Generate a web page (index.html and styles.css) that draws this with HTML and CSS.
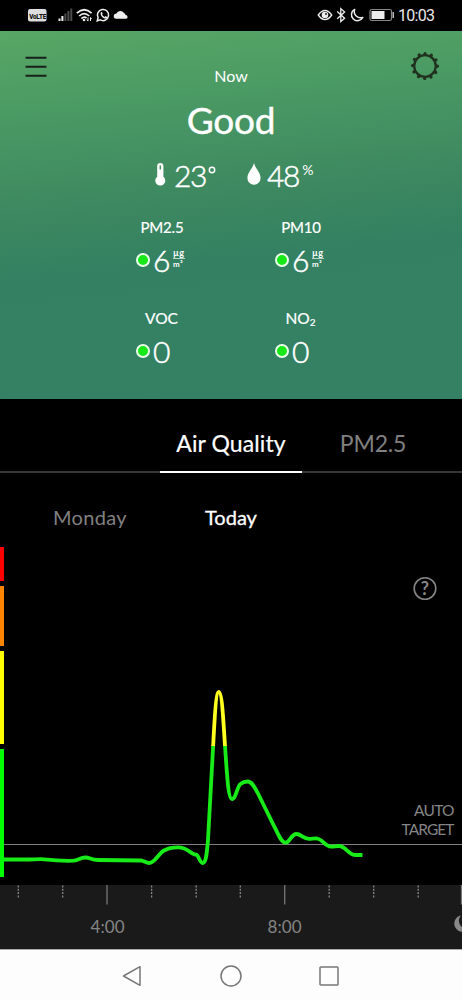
FILE: index.html
```html
<!DOCTYPE html>
<html lang="en">
<head>
<meta charset="utf-8">
<meta name="viewport" content="width=device-width, initial-scale=1">
<title>Air Quality</title>
<link rel="stylesheet" href="styles.css">
</head>
<body>
<div class="phone">
  <div class="status">
    <svg class="status-left" width="106" height="20" viewBox="26 5 106 20">
      <rect x="28" y="9" width="18.500" height="12.500" rx="2" fill="#ddd"/>
      <text class="volte" transform="translate(29.200 18.600) scale(.78 1)">VoLTE</text>
      <g fill="#eee"><rect x="58.500" y="18.500" width="2" height="2.500"/><rect x="61.400" y="16" width="2" height="5"/></g>
      <g fill="#4b4b4b"><rect x="64.400" y="13.500" width="2" height="7.500"/><rect x="67.400" y="11" width="2" height="10"/><rect x="70.300" y="8.500" width="2" height="12.500"/></g>
      <g fill="none" stroke="#eee" stroke-width="1.700"><path d="M76.800 13.200Q84.200 6.300 91.600 13.200M79.200 16Q84.200 11.300 89.200 16M81.400 18.600Q84.200 16 86.500 18"/></g>
      <circle cx="84" cy="20" r="1.300" fill="#eee"/>
      <path d="M88 17.500v3.500M86.800 19.700l1.200 1.500M90.500 21v-3.500l1 1.500" fill="none" stroke="#eee"/>
      <path d="M97.200 20.900l.9-3.200a5.600 5.600 0 1 1 2.200 2.200z" fill="none" stroke="#eee" stroke-width="1.500"/>
      <path d="M100.800 12.200l1.100-.2.800 1.800-.6.900q.9 1.600 2.500 2.200l.9-.9 1.700.9q0 1.500-1.500 1.700c-2.900 0-5.900-3.400-4.900-6.400z" fill="#eee"/>
      <path d="M116.200 18.700a2.600 2.600 0 0 1 .2-5.200 4.300 4.300 0 0 1 7.600-.4 2.600 2.600 0 0 1 1.500 2 1.800 1.800 0 0 1 .5 3.600z" fill="#eee"/>
    </svg>
    <div class="status-right">
      <svg width="80" height="20" viewBox="316 5 80 20">
        <path d="M318.300 15Q321.500 10.500 325 10.500T331.700 15Q328.500 19.600 325 19.600T318.300 15z" fill="none" stroke="#eee" stroke-width="1.400"/>
        <circle cx="325" cy="15" r="3.300" fill="#eee"/><circle cx="326" cy="14" r="1" fill="#222"/>
        <path d="M337.200 11.500l7.400 6.800-3.800 3.300V8.600l3.800 3.300-7.400 6.800" fill="none" stroke="#eee" stroke-width="1.300"/>
        <path d="M354.600 9.400A6 6 0 1 0 362.800 17.400 6.400 6.400 0 0 1 354.600 9.400z" fill="none" stroke="#eee" stroke-width="1.500" stroke-linejoin="round"/>
        <rect x="370" y="9.500" width="21.500" height="11" rx="1.800" fill="none" stroke="#888" stroke-width="1.200"/>
        <rect x="371.500" y="11" width="13" height="8" fill="#eee"/><rect x="392.500" y="12" width="1.500" height="6" fill="#bbb"/>
      </svg>
      <span class="clock">10:03</span>
    </div>
  </div>

  <header class="hero">
    <svg class="menu" width="22" height="22" viewBox="0 0 22 22"><path d="M.5 1.700h21M.5 10.700h21M.5 19.700h21" stroke="#17201a" stroke-width="2"/></svg>
    <svg class="gear" width="30" height="30" viewBox="-15 -15 30 30">
      <circle r="10.800" fill="none" stroke="#20311f" stroke-width="2.300"/>
      <circle r="12.500" fill="none" stroke="#20311f" stroke-width="3.200" stroke-linecap="round" stroke-dasharray=".1 6.445" transform="rotate(-90)"/>
    </svg>
    <div class="now">Now</div>
    <div class="rating">Good</div>
    <div class="climate">
      <div class="reading">
        <svg width="11" height="23" viewBox="0 0 11 23"><path d="M2.200 3a3.100 3 0 0 1 6.200 0v10.700a5 5 0 1 1-6.200 0z" fill="#fff"/><path d="M5.300 2.500v4" stroke="#43925f" stroke-width="1.500"/></svg>
        <span class="big temp">23</span><svg class="degree" width="8" height="8" viewBox="0 0 8 8"><circle cx="4" cy="4" r="2.700" fill="none" stroke="#fff" stroke-width="1.500"/></svg>
      </div>
      <div class="reading humidity">
        <svg width="14" height="23" viewBox="0 0 14 23"><path d="M7 0C8 5 13.600 9.500 13.600 15a6.600 6.800 0 0 1-13.200 0C.400 9.500 6 5 7 0z" fill="#fff"/></svg>
        <span class="big hum">48</span><span class="percent">%</span>
      </div>
    </div>
    <div class="metrics">
      <div class="metric"><div class="label pm">PM2.5</div><div class="value"><i class="dot"></i><span class="big">6</span><span class="unit"><b>µg</b><b>m³</b></span></div></div>
      <div class="metric"><div class="label pm">PM10</div><div class="value"><i class="dot"></i><span class="big">6</span><span class="unit"><b>µg</b><b>m³</b></span></div></div>
      <div class="metric"><div class="label">VOC</div><div class="value"><i class="dot"></i><span class="big">0</span></div></div>
      <div class="metric"><div class="label">NO<sub>2</sub></div><div class="value"><i class="dot"></i><span class="big">0</span></div></div>
    </div>
  </header>

  <nav class="tabs"><span class="tab active">Air Quality</span><span class="tab">PM2.5</span></nav>
  <div class="days"><span class="day monday">Monday</span><span class="day today">Today</span></div>

  <svg class="chart" width="462" height="345" viewBox="0 540 462 345">
    <defs>
      <linearGradient id="level" gradientUnits="userSpaceOnUse" x1="0" y1="540" x2="0" y2="885"><stop offset=".597" stop-color="#ffff20"/><stop offset=".597" stop-color="#18ec18"/></linearGradient>
    </defs>
    <path d="M4 844.500H462" stroke="#808080" stroke-width="1.200"/>
    <path d="M4 859.500H25C34 859.500 38 859 44 859.300C54 860.400 64 861 73 860.700C78 860.400 80 857.500 85.500 857.500C90 857.500 91 860 98 860L141 860.500C144 860.600 146 863 149 863C155 863 158 854 164 850.500C169 847.500 174 847.300 178 847.300C189 847.300 190 854.700 196.500 854.700C199 856 200 863 202.500 863C206 863 206.700 855 208 840C209.500 815 211 780 213.300 743C214.500 720 216 692 218.800 692C222 692 223.300 720 225 746C227 773 228 799 232 799C236 799 237 786.500 240.500 784C243 782 245 781.500 247.500 781.500C252 781.500 254.500 787 258 793.500L274 826C278 833 281 842.700 285.500 842.700C290 842.700 291 834 296.500 834C301 834 303 838.800 309 838.800C312 838.800 314 838.300 317 838.500C323 839.500 325 846.500 331 846.700C335 846.700 335 846 339 846C346 846 348 855 356 855H362.500" fill="none" stroke="url(#level)" stroke-width="3.800" stroke-linejoin="round"/>
    <path d="M0 547h4v34H0z" fill="#f00"/><path d="M0 586h4v60H0z" fill="#ff8500"/><path d="M0 651h4v93H0z" fill="#ff0"/><path d="M0 749h4v128H0z" fill="#0f0"/>
    <circle cx="425" cy="588.500" r="10.800" fill="none" stroke="#858585" stroke-width="1.600"/>
    <text class="help" x="425" y="594.700" text-anchor="middle">?</text>
    <text class="target" x="414" y="816.200" textLength="40.500">AUTO</text>
    <text class="target" x="401.500" y="835" textLength="53">TARGET</text>
  </svg>

  <svg class="axis" width="462" height="64" viewBox="0 885 462 64">
    <path d="M107 885v19.500M284.700 885v19.500M461.500 885v19.500" stroke="#777" stroke-width="1.300"/>
    <path d="M18.300 885.500v12M62.700 885.500v12M151.600 885.500v12M196.200 885.500v12M240.300 885.500v12M329.200 885.500v12M373.700 885.500v12M418.200 885.500v12" stroke="#888" stroke-width="1.300" stroke-dasharray="2 1.300"/>
    <text class="hour" x="90.500" y="932.700" textLength="34">4:00</text>
    <text class="hour" x="267.500" y="932.700" textLength="34">8:00</text>
    <path d="M461 915.500a8.200 8.200 0 1 0 8 13a8 8 0 0 1-8-13z" fill="#888"/>
  </svg>

  <footer class="navbar">
    <svg width="20" height="22" viewBox="0 0 20 22"><path d="M18 1.700v18.600L1.500 11z" fill="none" stroke="#777" stroke-width="1.500" stroke-linejoin="round"/></svg>
    <svg width="22" height="22" viewBox="0 0 22 22"><circle cx="11" cy="11" r="10" fill="none" stroke="#777" stroke-width="1.500"/></svg>
    <svg width="20" height="20" viewBox="0 0 20 20"><rect x="1" y="1" width="18" height="18" rx=".8" fill="none" stroke="#777" stroke-width="1.500"/></svg>
  </footer>
</div>
</body>
</html>
```
FILE: styles.css
```css
* { box-sizing: border-box; }
body { margin: 0; background: #000; color: #fff; font-family: Lato, "Liberation Sans", sans-serif; }
svg { display: block; flex: none; }
.phone { width: 462px; height: 1000px; display: flex; flex-direction: column; overflow: hidden; }
.status { height: 31px; padding: 5px 0 0 26px; display: flex; justify-content: space-between; }
.status-right { display: flex; width: 146px; }
.clock { margin-left: 2px; font: 16px/21px Roboto, sans-serif; letter-spacing: -.7px; color: #e8e8e8; }
.volte { font: 900 8px Roboto, sans-serif; letter-spacing: -.2px; fill: #111; }

.hero { position: relative; height: 367.500px; padding-top: 35px; background: linear-gradient(174deg, #59a765 0%, #4b9b64 19%, #3d8860 45%, #338162 60%, #348163 100%); }
.menu { position: absolute; left: 25px; top: 25px; }
.gear { position: absolute; left: 410px; top: 20px; }
.now { height: 20px; line-height: 20px; font-size: 16px; text-align: center; }
.rating { height: 42px; margin-top: 13px; line-height: 42px; font-size: 37px; text-align: center; letter-spacing: -.2px; -webkit-text-stroke: .4px #fff; }
.climate { display: flex; height: 36px; margin-top: 16px; padding-left: 155px; line-height: 36px; }
.reading { display: flex; align-items: flex-start; width: 92px; }
.reading > svg:first-child { margin-top: 6px; }
.big { font-size: 30px; font-weight: 300; letter-spacing: -1.300px; -webkit-text-stroke: .5px #fff; }
.temp { margin-left: 8px; }
.reading .degree { margin: 9px 0 0 2px; }
.hum { margin-left: 6px; }
.percent { margin: -5px 0 0 3px; font-size: 14px; }
.metrics { display: grid; grid-template-columns: 139px 139px; grid-auto-rows: 91px; margin: 24px 0 0 92px; }
.label { height: 20px; line-height: 20px; font-size: 15.500px; text-align: center; -webkit-text-stroke: .2px #fff; }
.pm { font-size: 15px; letter-spacing: -.2px; padding-left: 1px; }
.label sub { font-size: 10px; line-height: 0; vertical-align: -2px; }
.value { display: flex; align-items: center; height: 32px; margin-top: 7px; padding-left: 44px; }
.value .big { width: 16px; margin-left: -1px; }
.dot { width: 14px; height: 14px; margin: -1px 4px 0 0; border: 2px solid #eaffea; border-radius: 50%; background: #17e817; }
.unit { display: flex; flex-direction: column; margin: -4px 0 0 4px; }
.unit b { height: 10px; font-size: 9px; line-height: 9px; letter-spacing: .4px; font-weight: 700; }
.unit b + b { border-top: 1px solid #b7d5c8; font-size: 8px; line-height: 10px; }

.tabs { display: flex; height: 74.500px; padding-left: 160px; border-bottom: 2px solid #363636; font-size: 23px; }
.tab { width: 142px; height: 74.500px; padding-top: 29px; line-height: 30px; text-align: center; letter-spacing: -.2px; color: #808080; }
.tab.active { color: #fff; border-bottom: 2px solid #fff; letter-spacing: .1px; -webkit-text-stroke: .2px #fff; }
.days { display: flex; height: 67px; padding: 29px 0 0 53px; font-size: 20px; line-height: 30px; }
.day { color: #808080; }
.monday { width: 152px; letter-spacing: .3px; }
.today { color: #fff; -webkit-text-stroke: .3px #fff; }
.help { font: bold 18px Lato, sans-serif; fill: #858585; }
.target { font: 15.500px Lato, sans-serif; fill: #858585; }
.axis { background: #1a1a1a; }
.hour { font: 17px Lato, sans-serif; fill: #858585; }
.navbar { display: flex; align-items: center; height: 51px; padding: 1px 123px 0 122px; justify-content: space-between; background: #fdfdfd; border-top: 1px solid #aaa; }
```
